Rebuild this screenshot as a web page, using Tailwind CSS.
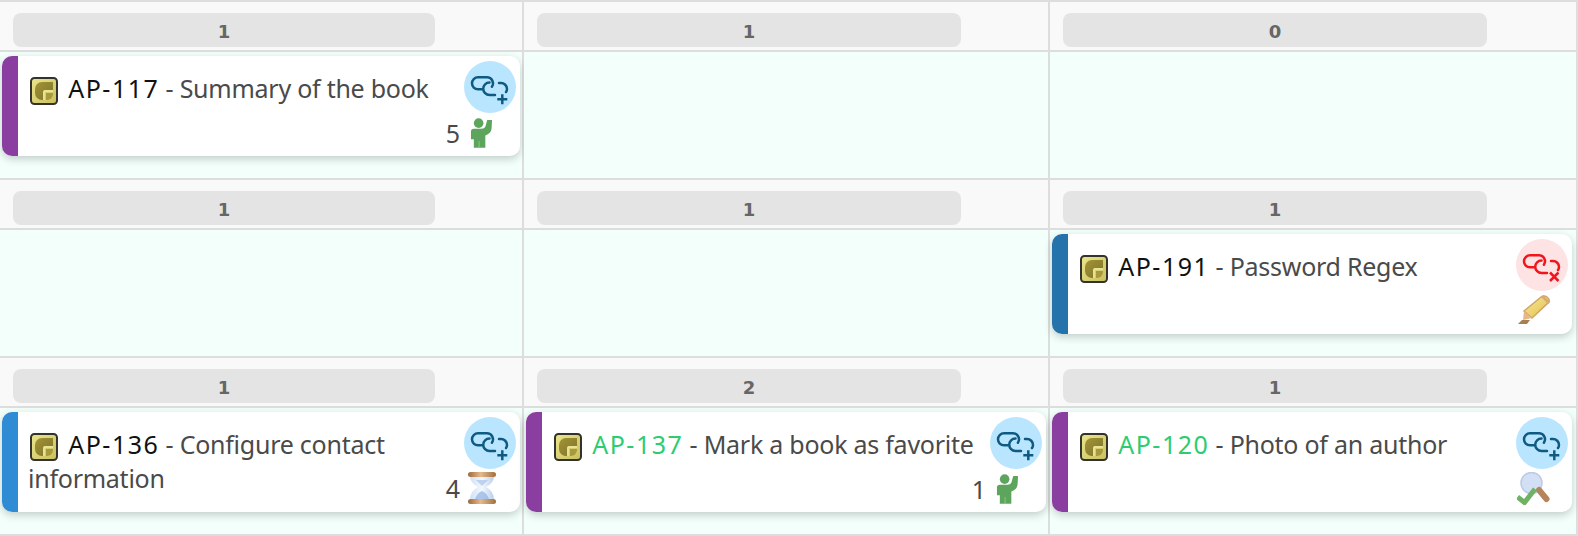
<!DOCTYPE html>
<html lang="en">
<head>
    <meta charset="UTF-8">
    <meta name="viewport" content="width=device-width, initial-scale=1.0">
    <title>Board</title>
    <script src="https://cdn.jsdelivr.net/npm/@tailwindcss/browser@4"></script>
</head>
<body class="bg-white font-['Noto_Sans',sans-serif] overflow-hidden">
    <!-- shared icons -->
    <svg class="absolute w-0 h-0" width="0" height="0">
        <defs>
            <linearGradient id="gold" x1="0" y1="0" x2="1" y2="1"><stop offset="0" stop-color="#ece58c"/><stop offset="1" stop-color="#c9bf5e"/></linearGradient>
            <linearGradient id="olive" x1="0" y1="0" x2="1" y2="1"><stop offset="0" stop-color="#a39437"/><stop offset="1" stop-color="#7f7329"/></linearGradient>
            <linearGradient id="wood" x1="0" y1="0" x2="1" y2="0"><stop offset="0" stop-color="#9c6a3c"/><stop offset=".45" stop-color="#e6b88a"/><stop offset="1" stop-color="#a0703f"/></linearGradient>
            <linearGradient id="glass" x1="0" y1="0" x2="1" y2="0"><stop offset="0" stop-color="#cfe0f5"/><stop offset=".5" stop-color="#f4f8fd"/><stop offset="1" stop-color="#b9cfec"/></linearGradient>
            <linearGradient id="lead" x1="0" y1="0" x2="1" y2="1"><stop offset="0" stop-color="#f7e98f"/><stop offset="1" stop-color="#e3bf55"/></linearGradient>
        </defs>
        <symbol id="type" viewBox="0 0 28 28">
            <rect x="1" y="1" width="26" height="26" rx="3.500" fill="url(#gold)" stroke="#33332d" stroke-width="2"/>
            <path d="M5 12a7 7 0 0 1 7-7h11v8h-8a2 2 0 0 0-2 2v8h-1a7 7 0 0 1-7-7z" fill="url(#olive)"/>
            <path d="M14 23v-8a1 1 0 0 1 1-1h8" fill="none" stroke="#efe9a0" stroke-width="1.400"/>
            <path d="M16 23v-7h7v1a6 6 0 0 1-6 6z" fill="#a89a3c"/>
        </symbol>
        <symbol id="chain" viewBox="0 0 52 52">
            <path d="M18.700 28.300H14a6 6 0 0 1 0-12h8.700a6 6 0 0 1 5.200 9.400M25.500 21.500a6.200 6.200 0 0 0 0 12.500H31M35 22h2a6 6 0 0 1 6 6q0 2-1 3" fill="none" stroke="currentColor" stroke-width="2.500" stroke-linecap="round"/>
        </symbol>
        <symbol id="person" viewBox="0 0 24 31">
            <circle cx="9" cy="5.200" r="5" fill="#5da55c"/>
            <path d="M1 14q0-3 3-3h8q3 0 4-2l2-7h5l-.5 9q-.5 5-6.500 7V31H4V22H1z" fill="#5da55c"/>
            <path d="M9.500 24v7" stroke="#9fcb9d" stroke-width=".8"/>
        </symbol>
        <symbol id="pencil" viewBox="0 0 33 30">
            <path d="M6 16 23 2q3-2 6 0t2 5L14 23z" fill="url(#lead)" stroke="#cfa468" stroke-width="1.500"/>
            <path d="M6 16l8 7-9 2z" fill="#e6b887"/>
            <path d="M24 1l7 7" stroke="#d8a878" stroke-width="2.500"/>
            <path d="M0 29h9l3-4H4z" fill="#a87f50"/>
        </symbol>
        <symbol id="hourglass" viewBox="0 0 30 32">
            <path d="M3 4h24q0 7-8 11 8 4 8 13H3q0-9 8-13-8-4-8-11z" fill="url(#glass)"/>
            <path d="M8 27q2-6 7-8 5 2 7 8z" fill="#8fb0e2" opacity=".7"/>
            <path d="M9 8h12l-6 6z" fill="#a8c2e8" opacity=".7"/>
            <rect x="1" y="0" width="28" height="5" rx="2.500" fill="url(#wood)"/>
            <rect x="1" y="27" width="28" height="5" rx="2.500" fill="url(#wood)"/>
        </symbol>
        <symbol id="check" viewBox="0 0 33 33">
            <circle cx="14.500" cy="11" r="10.500" fill="#d3dff4" stroke="#bccbe4" stroke-width="1.500"/>
            <path d="M22 18 29.500 27" stroke="#b5845a" stroke-width="6" stroke-linecap="round"/>
            <path d="M0.500 25l7 5.500L18 17" fill="none" stroke="#6fb264" stroke-width="5"/>
        </symbol>
    </svg>

    <div class="grid grid-cols-[524px_526px_528px] grid-rows-[178px_178px_180px] h-[536px] w-[1578px]">

        <!-- row 1 -->
        <div class="border-t-2 border-r-2 border-[#dddddd] bg-[#f2fffa]">
            <div class="h-[48px] bg-[#f9f9f9] pl-[13px] pt-[11px]"><div class="h-[34px] w-[422px] rounded-[8px] bg-[#e4e4e4] text-center font-['DejaVu_Sans',sans-serif] text-[18px] leading-[37px] font-bold text-[#666666]">1</div></div>
            <div class="border-t-2 border-[#dddddd] px-[2px] pt-[4px]">
                <div class="flex h-[100px] rounded-[10px] bg-white shadow-[0_3px_8px_rgba(0,0,0,0.2)] overflow-hidden">
                    <div class="w-[16px] shrink-0 bg-[#8a3e9f]"></div>
                    <div class="flex-1 pl-[10px] pr-[4px] pt-[5px]">
                        <div class="flex h-[52px] items-start">
                            <div class="flex-1 pt-[10px] pr-[20px] text-[25px] tracking-[-0.25px] leading-[34px] text-[#4a4a4a]"><svg class="inline-block align-middle ml-[2px] mr-[4px] w-[28px] h-[28px] blur-[0.4px]"><use href="#type"/></svg> <span class="text-[#111111] tracking-[1.5px]">AP-117</span> - Summary of the book</div>
                            <div class="w-[52px] h-[52px] shrink-0 rounded-full bg-[#b9e6fe] text-[#0f5a82]"><svg class="w-[52px] h-[52px]" viewBox="0 0 52 52"><use href="#chain"/><path d="M38.300 33.300v10M33.300 38.300h10" stroke="currentColor" stroke-width="2.500"/></svg></div>
                        </div>
                        <div class="flex justify-end items-center gap-[10px] pr-[23px] mt-[5px]">
                            <span class="text-[25px] leading-[30px] text-[#4a4a4a]">5</span>
                            <svg class="w-[23px] h-[30px] blur-[0.4px]"><use href="#person"/></svg>
                        </div>
                    </div>
                </div>
            </div>
        </div>
        <div class="border-t-2 border-r-2 border-[#dddddd] bg-[#f2fffa]">
            <div class="h-[48px] bg-[#f9f9f9] pl-[13px] pt-[11px]"><div class="h-[34px] w-[424px] rounded-[8px] bg-[#e4e4e4] text-center font-['DejaVu_Sans',sans-serif] text-[18px] leading-[37px] font-bold text-[#666666]">1</div></div>
            <div class="border-t-2 border-[#dddddd]"></div>
        </div>
        <div class="border-t-2 border-r-2 border-[#dddddd] bg-[#f2fffa]">
            <div class="h-[48px] bg-[#f9f9f9] pl-[13px] pt-[11px]"><div class="h-[34px] w-[424px] rounded-[8px] bg-[#e4e4e4] text-center font-['DejaVu_Sans',sans-serif] text-[18px] leading-[37px] font-bold text-[#666666]">0</div></div>
            <div class="border-t-2 border-[#dddddd]"></div>
        </div>

        <!-- row 2 -->
        <div class="border-t-2 border-r-2 border-[#dddddd] bg-[#f2fffa]">
            <div class="h-[48px] bg-[#f9f9f9] pl-[13px] pt-[11px]"><div class="h-[34px] w-[422px] rounded-[8px] bg-[#e4e4e4] text-center font-['DejaVu_Sans',sans-serif] text-[18px] leading-[37px] font-bold text-[#666666]">1</div></div>
            <div class="border-t-2 border-[#dddddd]"></div>
        </div>
        <div class="border-t-2 border-r-2 border-[#dddddd] bg-[#f2fffa]">
            <div class="h-[48px] bg-[#f9f9f9] pl-[13px] pt-[11px]"><div class="h-[34px] w-[424px] rounded-[8px] bg-[#e4e4e4] text-center font-['DejaVu_Sans',sans-serif] text-[18px] leading-[37px] font-bold text-[#666666]">1</div></div>
            <div class="border-t-2 border-[#dddddd]"></div>
        </div>
        <div class="border-t-2 border-r-2 border-[#dddddd] bg-[#f2fffa]">
            <div class="h-[48px] bg-[#f9f9f9] pl-[13px] pt-[11px]"><div class="h-[34px] w-[424px] rounded-[8px] bg-[#e4e4e4] text-center font-['DejaVu_Sans',sans-serif] text-[18px] leading-[37px] font-bold text-[#666666]">1</div></div>
            <div class="border-t-2 border-[#dddddd] pl-[2px] pr-[4px] pt-[4px]">
                <div class="flex h-[100px] rounded-[10px] bg-white shadow-[0_3px_8px_rgba(0,0,0,0.2)] overflow-hidden">
                    <div class="w-[16px] shrink-0 bg-[#2673ab]"></div>
                    <div class="flex-1 pl-[10px] pr-[4px] pt-[5px]">
                        <div class="flex h-[52px] items-start">
                            <div class="flex-1 pt-[10px] pr-[20px] text-[25px] tracking-[-0.25px] leading-[34px] text-[#4a4a4a]"><svg class="inline-block align-middle ml-[2px] mr-[4px] w-[28px] h-[28px] blur-[0.4px]"><use href="#type"/></svg> <span class="text-[#111111] tracking-[1.5px]">AP-191</span> - Password Regex</div>
                            <div class="w-[52px] h-[52px] shrink-0 rounded-full bg-[#fde3e3] text-[#f4141c]"><svg class="w-[52px] h-[52px]" viewBox="0 0 52 52"><use href="#chain"/><path d="M34 33.500l8.500 8.500M42.500 33.500l-8.500 8.500" stroke="currentColor" stroke-width="2.500"/></svg></div>
                        </div>
                        <div class="flex justify-end items-center pr-[17px] mt-[4px]">
                            <svg class="w-[33px] h-[30px] blur-[0.4px]"><use href="#pencil"/></svg>
                        </div>
                    </div>
                </div>
            </div>
        </div>

        <!-- row 3 -->
        <div class="border-y-2 border-r-2 border-[#dddddd] bg-[#f2fffa]">
            <div class="h-[48px] bg-[#f9f9f9] pl-[13px] pt-[11px]"><div class="h-[34px] w-[422px] rounded-[8px] bg-[#e4e4e4] text-center font-['DejaVu_Sans',sans-serif] text-[18px] leading-[37px] font-bold text-[#666666]">1</div></div>
            <div class="border-t-2 border-[#dddddd] px-[2px] pt-[4px]">
                <div class="flex h-[100px] rounded-[10px] bg-white shadow-[0_3px_8px_rgba(0,0,0,0.2)] overflow-hidden">
                    <div class="w-[16px] shrink-0 bg-[#2f8bd3]"></div>
                    <div class="flex-1 pl-[10px] pr-[4px] pt-[5px]">
                        <div class="flex h-[52px] items-start">
                            <div class="flex-1 pt-[10px] pr-[20px] text-[25px] tracking-[-0.25px] leading-[34px] text-[#4a4a4a]"><svg class="inline-block align-middle ml-[2px] mr-[4px] w-[28px] h-[28px] blur-[0.4px]"><use href="#type"/></svg> <span class="text-[#111111] tracking-[1.5px]">AP-136</span> - Configure contact information</div>
                            <div class="w-[52px] h-[52px] shrink-0 rounded-full bg-[#b9e6fe] text-[#0f5a82]"><svg class="w-[52px] h-[52px]" viewBox="0 0 52 52"><use href="#chain"/><path d="M38.300 33.300v10M33.300 38.300h10" stroke="currentColor" stroke-width="2.500"/></svg></div>
                        </div>
                        <div class="flex justify-end items-center gap-[7px] pr-[19px] mt-[3px]">
                            <span class="text-[25px] leading-[32px] text-[#4a4a4a]">4</span>
                            <svg class="w-[30px] h-[32px] blur-[0.4px]"><use href="#hourglass"/></svg>
                        </div>
                    </div>
                </div>
            </div>
        </div>
        <div class="border-y-2 border-r-2 border-[#dddddd] bg-[#f2fffa]">
            <div class="h-[48px] bg-[#f9f9f9] pl-[13px] pt-[11px]"><div class="h-[34px] w-[424px] rounded-[8px] bg-[#e4e4e4] text-center font-['DejaVu_Sans',sans-serif] text-[18px] leading-[37px] font-bold text-[#666666]">2</div></div>
            <div class="border-t-2 border-[#dddddd] px-[2px] pt-[4px]">
                <div class="flex h-[100px] rounded-[10px] bg-white shadow-[0_3px_8px_rgba(0,0,0,0.2)] overflow-hidden">
                    <div class="w-[16px] shrink-0 bg-[#8a3e9f]"></div>
                    <div class="flex-1 pl-[10px] pr-[4px] pt-[5px]">
                        <div class="flex h-[52px] items-start">
                            <div class="flex-1 pt-[10px] pr-[4px] text-[25px] tracking-[-0.25px] leading-[34px] text-[#4a4a4a]"><svg class="inline-block align-middle ml-[2px] mr-[4px] w-[28px] h-[28px] blur-[0.4px]"><use href="#type"/></svg> <span class="text-[#2ecc71] tracking-[1.5px]">AP-137</span> - Mark a book as favorite</div>
                            <div class="w-[52px] h-[52px] shrink-0 rounded-full bg-[#b9e6fe] text-[#0f5a82]"><svg class="w-[52px] h-[52px]" viewBox="0 0 52 52"><use href="#chain"/><path d="M38.300 33.300v10M33.300 38.300h10" stroke="currentColor" stroke-width="2.500"/></svg></div>
                        </div>
                        <div class="flex justify-end items-center gap-[10px] pr-[23px] mt-[5px]">
                            <span class="text-[25px] leading-[30px] text-[#4a4a4a]">1</span>
                            <svg class="w-[23px] h-[30px] blur-[0.4px]"><use href="#person"/></svg>
                        </div>
                    </div>
                </div>
            </div>
        </div>
        <div class="border-y-2 border-r-2 border-[#dddddd] bg-[#f2fffa]">
            <div class="h-[48px] bg-[#f9f9f9] pl-[13px] pt-[11px]"><div class="h-[34px] w-[424px] rounded-[8px] bg-[#e4e4e4] text-center font-['DejaVu_Sans',sans-serif] text-[18px] leading-[37px] font-bold text-[#666666]">1</div></div>
            <div class="border-t-2 border-[#dddddd] pl-[2px] pr-[4px] pt-[4px]">
                <div class="flex h-[100px] rounded-[10px] bg-white shadow-[0_3px_8px_rgba(0,0,0,0.2)] overflow-hidden">
                    <div class="w-[16px] shrink-0 bg-[#8a3e9f]"></div>
                    <div class="flex-1 pl-[10px] pr-[4px] pt-[5px]">
                        <div class="flex h-[52px] items-start">
                            <div class="flex-1 pt-[10px] pr-[20px] text-[25px] tracking-[-0.25px] leading-[34px] text-[#4a4a4a]"><svg class="inline-block align-middle ml-[2px] mr-[4px] w-[28px] h-[28px] blur-[0.4px]"><use href="#type"/></svg> <span class="text-[#2ecc71] tracking-[1.5px]">AP-120</span> - Photo of an author</div>
                            <div class="w-[52px] h-[52px] shrink-0 rounded-full bg-[#b9e6fe] text-[#0f5a82]"><svg class="w-[52px] h-[52px]" viewBox="0 0 52 52"><use href="#chain"/><path d="M38.300 33.300v10M33.300 38.300h10" stroke="currentColor" stroke-width="2.500"/></svg></div>
                        </div>
                        <div class="flex justify-end items-center pr-[18px] mt-[3px]">
                            <svg class="w-[33px] h-[33px] blur-[0.4px]"><use href="#check"/></svg>
                        </div>
                    </div>
                </div>
            </div>
        </div>
    </div>
</body>
</html>
